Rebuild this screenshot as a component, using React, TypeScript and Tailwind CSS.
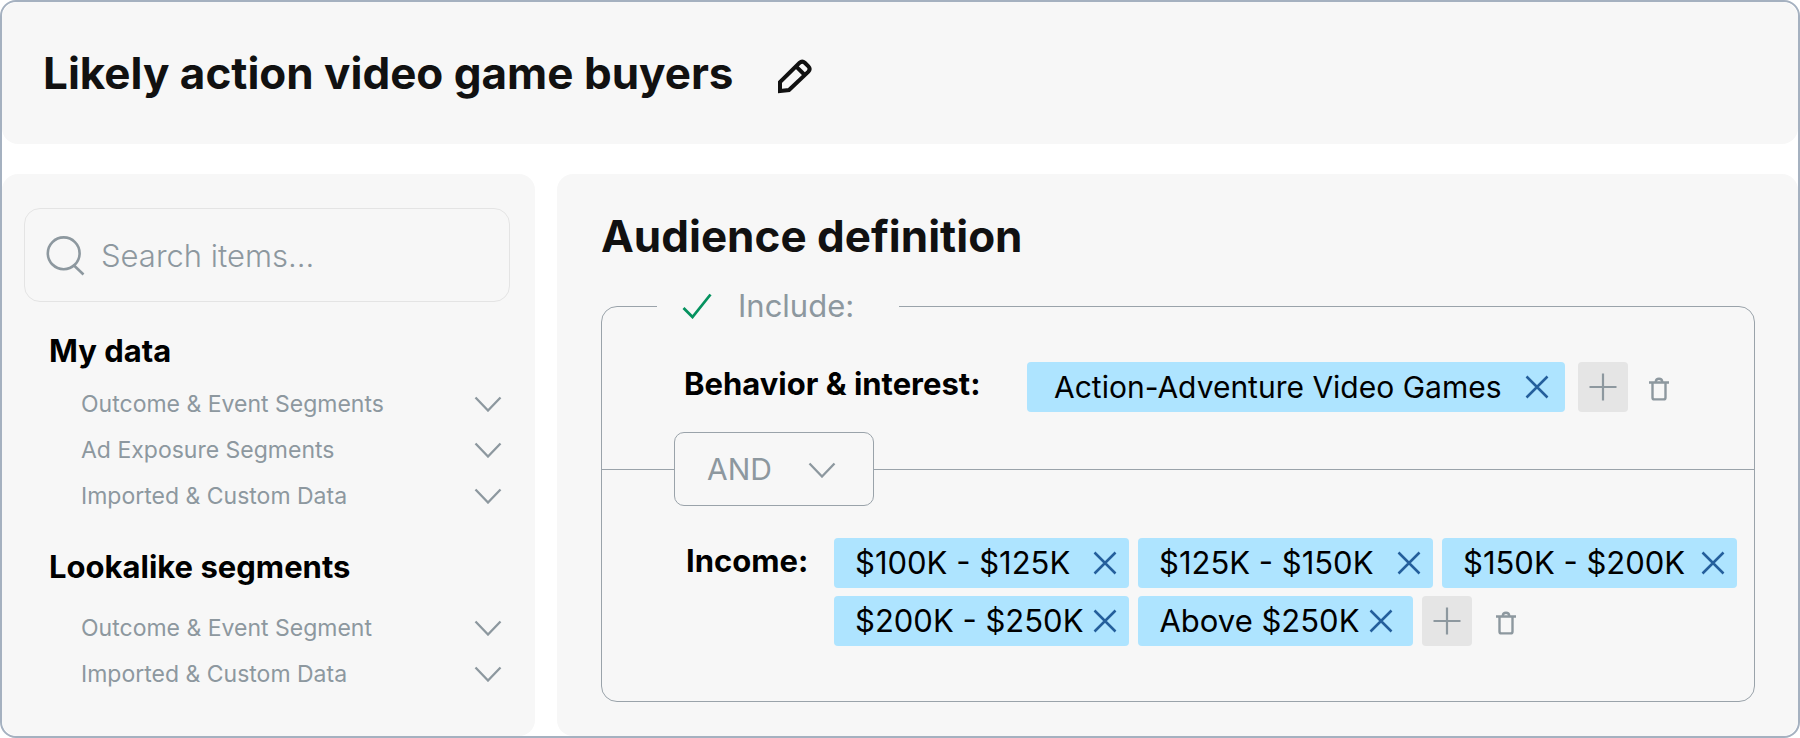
import { useState } from "react";
import clsx from "clsx";

const MY_DATA = ["Outcome & Event Segments", "Ad Exposure Segments", "Imported & Custom Data"];
const LOOKALIKE = ["Outcome & Event Segment", "Imported & Custom Data"];
const INCOME = ["$100K - $125K", "$125K - $150K", "$150K - $200K", "$200K - $250K", "Above $250K"];

const TAG_STYLES = {
  interest: "gap-6 pl-[27px] pr-4 text-[30px]",
  range:    "gap-2.5 justify-between min-w-[295px] pl-[21px] pr-3 text-[31px]",
  open:     "gap-2.5 pl-[21px] pr-5 text-[31px]",
};

function Chevron({ className }: { className?: string }) {
  return (
    <svg viewBox="0 0 28 16" className={clsx("w-7 h-4 flex-shrink-0", className)} fill="none" stroke="currentColor" strokeWidth="2.3" aria-hidden="true">
      <path d="M1.5 1.5 14 14.5 26.5 1.5" />
    </svg>
  );
}

function Pencil() {
  return (
    <svg viewBox="0 0 36 36" className="w-9 h-9" fill="none" stroke="currentColor" strokeWidth="4" aria-hidden="true">
      <path d="M3 33V24L22.600 4.800Q25.200 2.400 27.800 4.800L31.400 8.400Q33.800 11 31.400 13.600L12 32Z" />
      <path d="M19 8.400 28 17.200" />
    </svg>
  );
}

function Cross() {
  return (
    <svg viewBox="0 0 24 24" className="w-6 h-6" fill="none" stroke="currentColor" strokeWidth="2.5" aria-hidden="true">
      <path d="M1.500 1.500 22.500 22.500M22.500 1.500 1.500 22.500" />
    </svg>
  );
}

function Trash() {
  return (
    <svg viewBox="0 0 20 24" className="w-5 h-6" fill="none" stroke="currentColor" strokeWidth="2.4" aria-hidden="true">
      <path d="M0 5.500H20M3.500 5.500V20.400Q3.500 22.400 5.500 22.400H14.500Q16.500 22.400 16.500 20.400V5.500" />
      <path d="M6.800 5V4.500Q7 1.700 10 1.700T13.200 4.500V5" />
    </svg>
  );
}

function Tag({ label, variant }: { label: string; variant: keyof typeof TAG_STYLES }) {
  return (
    <span className={clsx("flex items-center h-[50px] rounded bg-[#aee4ff] text-black whitespace-nowrap", TAG_STYLES[variant])}>
      {label}
      <button type="button" aria-label={`Remove ${label}`} className="text-[#245f9c]">
        <Cross />
      </button>
    </span>
  );
}

function RowActions({ className }: { className?: string }) {
  return (
    <div className={clsx("flex items-center", className)}>
      <button type="button" aria-label="Add value" className="flex items-center justify-center w-[50px] h-[50px] rounded bg-[#e5e5e5] text-[#8d989f]">
        <svg viewBox="0 0 28 28" className="w-7 h-7" fill="none" stroke="currentColor" strokeWidth="2.2" aria-hidden="true">
          <path d="M14 .5V27.500M.5 14H27.500" />
        </svg>
      </button>
      <button type="button" aria-label="Delete condition" className="pt-1 text-[#8d989f]">
        <Trash />
      </button>
    </div>
  );
}

function SegmentList({ items }: { items: string[] }) {
  return (
    <ul>
      {items.map(item => (
        <li key={item}>
          <button type="button" className="flex items-center justify-between w-full h-[46px] pl-[79px] pr-[33px] text-[23px] text-[#8d989f]">
            {item}
            <Chevron />
          </button>
        </li>
      ))}
    </ul>
  );
}

export default function App() {
  const [operator, setOperator] = useState("AND");

  return (
    <div className="flex flex-col min-h-screen border-2 border-[#a5b1c0] rounded-2xl bg-white overflow-hidden font-['Inter',sans-serif]">
      <header className="flex items-center gap-[43px] h-[142px] px-[41px] bg-[#f7f7f7] rounded-2xl text-[#111]">
        <h1 className="text-[44px] font-bold">Likely action video game buyers</h1>
        <button type="button" aria-label="Rename audience" className="pt-1.5">
          <Pencil />
        </button>
      </header>

      <div className="flex flex-1 gap-[22px] mt-[30px]">
        <aside className="w-[533px] flex-shrink-0 pt-[34px] bg-[#f7f7f7] rounded-2xl">
          <label className="flex items-center gap-4 h-[94px] ml-[22px] mr-[25px] px-5 pt-0.5 border border-[#e4e4e4] rounded-2xl text-[#8d989f]">
            <svg viewBox="0 0 40 40" className="w-10 h-10 flex-shrink-0" fill="none" stroke="currentColor" strokeWidth="2.6" aria-hidden="true">
              <circle cx="18.700" cy="17.300" r="15.900" />
              <path d="M28.500 29 38.500 38.500" />
            </svg>
            <input
              type="search"
              aria-label="Search items"
              placeholder="Search items..."
              className="flex-1 min-w-0 bg-transparent text-[31px] font-light outline-none placeholder:text-[#8d989f]"
            />
          </label>

          <h2 className="mt-[29px] mb-2.5 pl-[47px] text-[31px] leading-10 font-bold text-black">My data</h2>
          <SegmentList items={MY_DATA} />
          <h2 className="mt-7 mb-[18px] pl-[47px] text-[31px] leading-10 font-bold text-black">Lookalike segments</h2>
          <SegmentList items={LOOKALIKE} />
        </aside>

        <main className="flex-1 min-w-0 pt-8 pl-11 pr-[43px] pb-[34px] bg-[#f7f7f7] rounded-2xl">
          <h2 className="text-[44px] leading-[60px] font-bold text-[#111]">Audience definition</h2>

          <fieldset className="mt-4 border border-[#9aa3aa] rounded-2xl">
            <legend className="flex items-center gap-[26px] h-12 ml-[55px] pl-[25px] pr-[45px] text-[31px] text-[#8d989f]">
              <svg viewBox="0 0 30 26" className="w-[30px] h-[26px] text-[#05925f]" fill="none" stroke="currentColor" strokeWidth="2.8" aria-hidden="true">
                <path d="M1.500 15 10.500 24 28.500 1.500" />
              </svg>
              Include:
            </legend>

            <div className="flex items-start pl-[82px] pt-8">
              <h3 className="w-[343px] flex-shrink-0 text-[31px] leading-[44px] font-bold text-black">Behavior &amp; interest:</h3>
              <div className="flex gap-[13px]">
                <Tag label="Action-Adventure Video Games" variant="interest" />
                <RowActions className="gap-[21px]" />
              </div>
            </div>

            <div className="flex items-center mt-5">
              <div className="w-[72px] border-t border-[#9aa3aa]" />
              <div className="relative">
                <select
                  aria-label="Operator"
                  value={operator}
                  onChange={e => setOperator(e.target.value)}
                  className="block appearance-none w-[200px] h-[74px] pl-8 border border-[#9aa3aa] rounded-[10px] bg-transparent text-[30px] text-[#8d989f]"
                >
                  <option>AND</option>
                  <option>OR</option>
                </select>
                <Chevron className="absolute right-[38px] top-[30px] text-[#8d989f] pointer-events-none" />
              </div>
              <div className="flex-1 border-t border-[#9aa3aa]" />
            </div>

            <div className="flex items-start mt-8 pl-[84px] pb-[55px]">
              <h3 className="w-[148px] flex-shrink-0 text-[31px] leading-[46px] font-bold text-black">Income:</h3>
              <div className="flex flex-wrap flex-1 gap-x-[9px] gap-y-2">
                {INCOME.map(range => (
                  <Tag key={range} label={range} variant={range.startsWith("Above") ? "open" : "range"} />
                ))}
                <RowActions className="gap-6" />
              </div>
            </div>
          </fieldset>
        </main>
      </div>
    </div>
  );
}
